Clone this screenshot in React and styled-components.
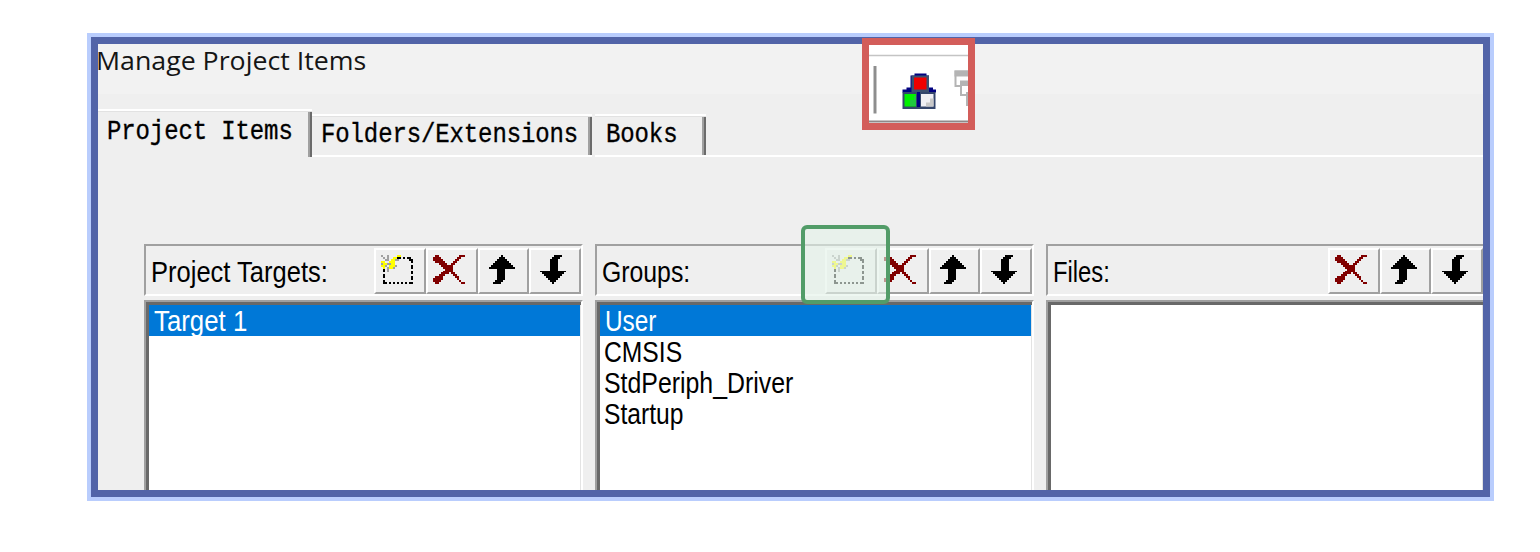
import React from "react";
import styled, { createGlobalStyle } from "styled-components";

const GlobalStyle = createGlobalStyle`
  * { box-sizing: border-box; }
  body { margin: 0; background: #fff; overflow: hidden; }
`;

const Page = styled.main`
  position: relative;
  width: 1540px;
  height: 552px;
  padding: 33px 0 0 87px;
  background: #fff;
`;

const Halo = styled.div`
  width: 1407px;
  height: 468px;
  border: 4px solid #b9cdfd;
`;

const Dialog = styled.section`
  display: flex;
  flex-direction: column;
  width: 100%;
  height: 100%;
  border: 7px solid #5264a8;
  background: #efefef;
  overflow: hidden;
`;

const TitleBar = styled.header`
  flex: none;
  height: 50px;
  background: #f2f2f2;
`;

const Title = styled.h1`
  margin: 0 0 0 -2px;
  width: max-content;
  font: 400 26px/32px "Open Sans", "Noto Sans", sans-serif;
  color: #151515;
  white-space: pre;
  transform: scaleX(${(p) => p.$stretch});
  transform-origin: 0 0;
`;

const TabStrip = styled.nav`
  flex: none;
  display: flex;
  align-items: flex-end;
  height: 63px;
  padding-top: 15px;
`;

const Tab = styled.div`
  flex: none;
  width: ${(p) => p.$width}px;
  height: ${(p) => (p.$active ? 48 : 43)}px;
  padding: ${(p) => (p.$active ? 7 : 5)}px 0 0 ${(p) => p.$indent || 9}px;
  margin-left: ${(p) => p.$gap || 0}px;
  border-top: 2px solid #fff;
  border-bottom: ${(p) => (p.$active ? "0" : "2px solid #fff")};
  box-shadow: inset 0 1px 0 #e2e2e2, inset -2px 0 0 #6b6b6b, inset -4px 0 0 #a0a0a0;
`;

const TabRest = styled.div`
  flex: 1;
  height: 2px;
  background: #fff;
`;

const TabLabel = styled.span`
  display: block;
  width: max-content;
  font: 400 24px/27px "Liberation Mono", monospace;
  letter-spacing: -0.12px;
  color: #000;
  -webkit-text-stroke: 0.3px #000;
  transform: scaleY(1.17);
  transform-origin: 0 50%;
`;

const Panels = styled.div`
  display: flex;
  flex: none;
  gap: 12px;
  padding: 87px 0 0 46px;
`;

const Panel = styled.div`
  flex: none;
  width: 439px;
`;

const PanelHead = styled.div`
  display: flex;
  justify-content: space-between;
  height: 52px;
  border: 2px solid #a0a0a0;
  border-right-color: #fff;
  border-bottom-color: #fff;
  padding-left: 5px;
`;

const Label = styled.span`
  display: block;
  width: max-content;
  font: 400 29px/33px "Liberation Sans", Arial, sans-serif;
  color: inherit;
  white-space: pre;
  transform: scaleX(${(p) => p.$stretch});
  transform-origin: 0 0;
`;

const HeadLabel = styled.div`
  width: 180px;
  padding-top: 10px;
`;

const Tools = styled.div`
  display: flex;
  padding-top: 2px;
`;

const ToolButton = styled.div`
  display: flex;
  flex: none;
  width: 51.7px;
  height: 46px;
  padding: 5px 0 0 5px;
  border: 2px solid #fff;
  border-right-color: #a0a0a0;
  border-bottom-color: #a0a0a0;
`;

const List = styled.div`
  height: 220px;
  margin-top: 4px;
  border: 2px solid #a0a0a0;
  border-right-color: #fff;
  box-shadow: inset 3px 3px 0 #696969, inset -1px 0 0 #e3e3e3;
  padding: 3px 1px 0 3px;
  background: #fff;
`;

const Row = styled.div`
  height: 31px;
  padding-left: ${(p) => (p.$selected ? 5 : 4)}px;
  color: ${(p) => (p.$selected ? "#fff" : "#000")};
  background: ${(p) => (p.$selected ? "#0078d7" : "transparent")};
`;

const RedCallout = styled.div`
  position: absolute;
  left: 862px;
  top: 38px;
  width: 113px;
  height: 92px;
  border: 7px solid #d35d5a;
  background: #fff;
`;

const GreenCallout = styled.div`
  position: absolute;
  left: 801px;
  top: 225px;
  width: 89px;
  height: 79px;
  border: 4.5px solid #529c68;
  border-radius: 6px;
  background: rgba(228, 242, 233, 0.62);
  background-clip: padding-box;
`;

const COLORS = { K: "#000", R: "#800000", Y: "#ffff00", G: "#a0a0a0" };

const UP = [
  "......K......", ".....KKK.....", "....KKKKK....", "...KKKKKKK...",
  "..KKKKKKKKK..", ".KKKKKKKKKKK.", "KKKKKKKKKKKKK", "....KKKK.....",
  "....KKKK.....", "....KKKK.....", "....KKKK.....", "....KKKK.....",
  "....KKKK.....", "...KKKK......", "..KKKK.......",
];

const DOWN = [...UP].reverse().map((r) => [...r].reverse().join(""));

const DELETE = [
  ".RR..........RRR", "RRRR........RR..", "RRRRR......RR...", ".RRRRR....RR....",
  "...RRRR..RR.....", "....RRRRRR......", ".....RRRRR......", "......RRRR......",
  ".....RRRRR......", "....RRRR.RR.....", "...RRR....RR....", ".RRRR......RR...",
  "RRRRR.......R...", "RRRR.........R..", ".RR...........RR",
];

const NEW = [
  "G..G....YY......", ".G.G..YYKK.K.KK.", "..GG.YYGG.....KK", "YY..YYY........K",
  "GYYGGYY.........", "YYG.YYYG.......K", ".Y.GYYG........K", ".K.G............",
  ".K.G...........K", "...............K", ".K..............", ".K.............K",
  "...............K", ".K..............", ".KK.K.K.K.K.K.KK",
];

const cellsOf = (map, color) =>
  map
    .flatMap((row, y) => [...row].map((c, x) => (c === color ? `M${x} ${y}h1v1h-1z` : "")))
    .join("");

const PixelIcon = ({ map }) => (
  <svg
    width={map[0].length * 2}
    height={map.length * 1.94}
    viewBox={`0 0 ${map[0].length} ${map.length}`}
    preserveAspectRatio="none"
    shapeRendering="crispEdges"
  >
    {Object.keys(COLORS).map((c) => (
      <path key={c} d={cellsOf(map, c)} fill={COLORS[c]} />
    ))}
  </svg>
);

const ArrowSlot = styled.div`
  padding-left: 4px;
`;

const Toolbar = ({ withNew }) => (
  <Tools>
    {withNew && <ToolButton><PixelIcon map={NEW} /></ToolButton>}
    <ToolButton><PixelIcon map={DELETE} /></ToolButton>
    <ToolButton><ArrowSlot><PixelIcon map={UP} /></ArrowSlot></ToolButton>
    <ToolButton><ArrowSlot><PixelIcon map={DOWN} /></ArrowSlot></ToolButton>
  </Tools>
);

const ItemPanel = ({ title, stretch, items, withNew }) => (
  <Panel>
    <PanelHead>
      <HeadLabel><Label $stretch={stretch}>{title}</Label></HeadLabel>
      <Toolbar withNew={withNew} />
    </PanelHead>
    <List>
      {items.map(([name, s], i) => (
        <Row key={name} $selected={i === 0}><Label $stretch={s}>{name}</Label></Row>
      ))}
    </List>
  </Panel>
);

const BlocksIcon = () => (
  <svg width="99" height="78" viewBox="869 45 99 78" style={{ display: "block" }}>
    <path d="M869 55.500H968" stroke="#c4c4c4" strokeWidth="1.600" />
    <path d="M869 121.500H968" stroke="#8f8888" strokeWidth="2" />
    <path d="M875 66V113.500" stroke="#8e8e8e" strokeWidth="3" />
    <path d="M914.500 73.500h12v2h2.500v12h4v2h3v3h-33.500v-3h4v-2h4v-12h4z" fill="#000080" />
    <rect x="911.500" y="75.500" width="17.500" height="16.500" fill="#3c5070" />
    <rect x="914" y="77.500" width="12.500" height="12" fill="#f00000" />
    <rect x="902.500" y="92" width="33" height="17" fill="#34466c" />
    <rect x="904.500" y="94" width="11.500" height="12.500" fill="#00f000" />
    <path d="M910 104v-4h4v-4h2v10h-6z" fill="#20c840" />
    <rect x="917" y="92" width="3" height="15" fill="#000080" />
    <rect x="921" y="94" width="12.500" height="12.500" fill="#f0f0f4" />
    <path d="M926 106.500v-4h4v-4h3.500v8z" fill="#c8c8c8" />
    <g fill="#fff" stroke="#b4b4b4" strokeWidth="2">
      <path d="M955.500 71.500H970V86H955.500z" />
      <path d="M954.500 73.500H970" strokeWidth="6" />
      <path d="M961 81.500H974V95H961z" />
      <path d="M960 83.500H974" strokeWidth="5" />
      <path d="M967 92V106" />
    </g>
  </svg>
);

export default function App() {
  return (
    <Page>
      <GlobalStyle />
      <Halo>
        <Dialog>
          <TitleBar><Title $stretch={1.028}>Manage Project Items</Title></TitleBar>
          <TabStrip>
            <Tab $active $width={214}><TabLabel>Project Items</TabLabel></Tab>
            <Tab $width={280}><TabLabel>Folders/Extensions</TabLabel></Tab>
            <Tab $width={111} $gap={3} $indent={11}><TabLabel>Books</TabLabel></Tab>
            <TabRest />
          </TabStrip>
          <Panels>
            <ItemPanel title="Project Targets:" stretch={0.88} withNew items={[["Target 1", 0.89]]} />
            <ItemPanel
              title="Groups:"
              stretch={0.855}
              withNew
              items={[["User", 0.84], ["CMSIS", 0.85], ["StdPeriph_Driver", 0.857], ["Startup", 0.85]]}
            />
            <ItemPanel title="Files:" stretch={0.82} items={[]} />
          </Panels>
        </Dialog>
      </Halo>
      <RedCallout><BlocksIcon /></RedCallout>
      <GreenCallout />
    </Page>
  );
}
